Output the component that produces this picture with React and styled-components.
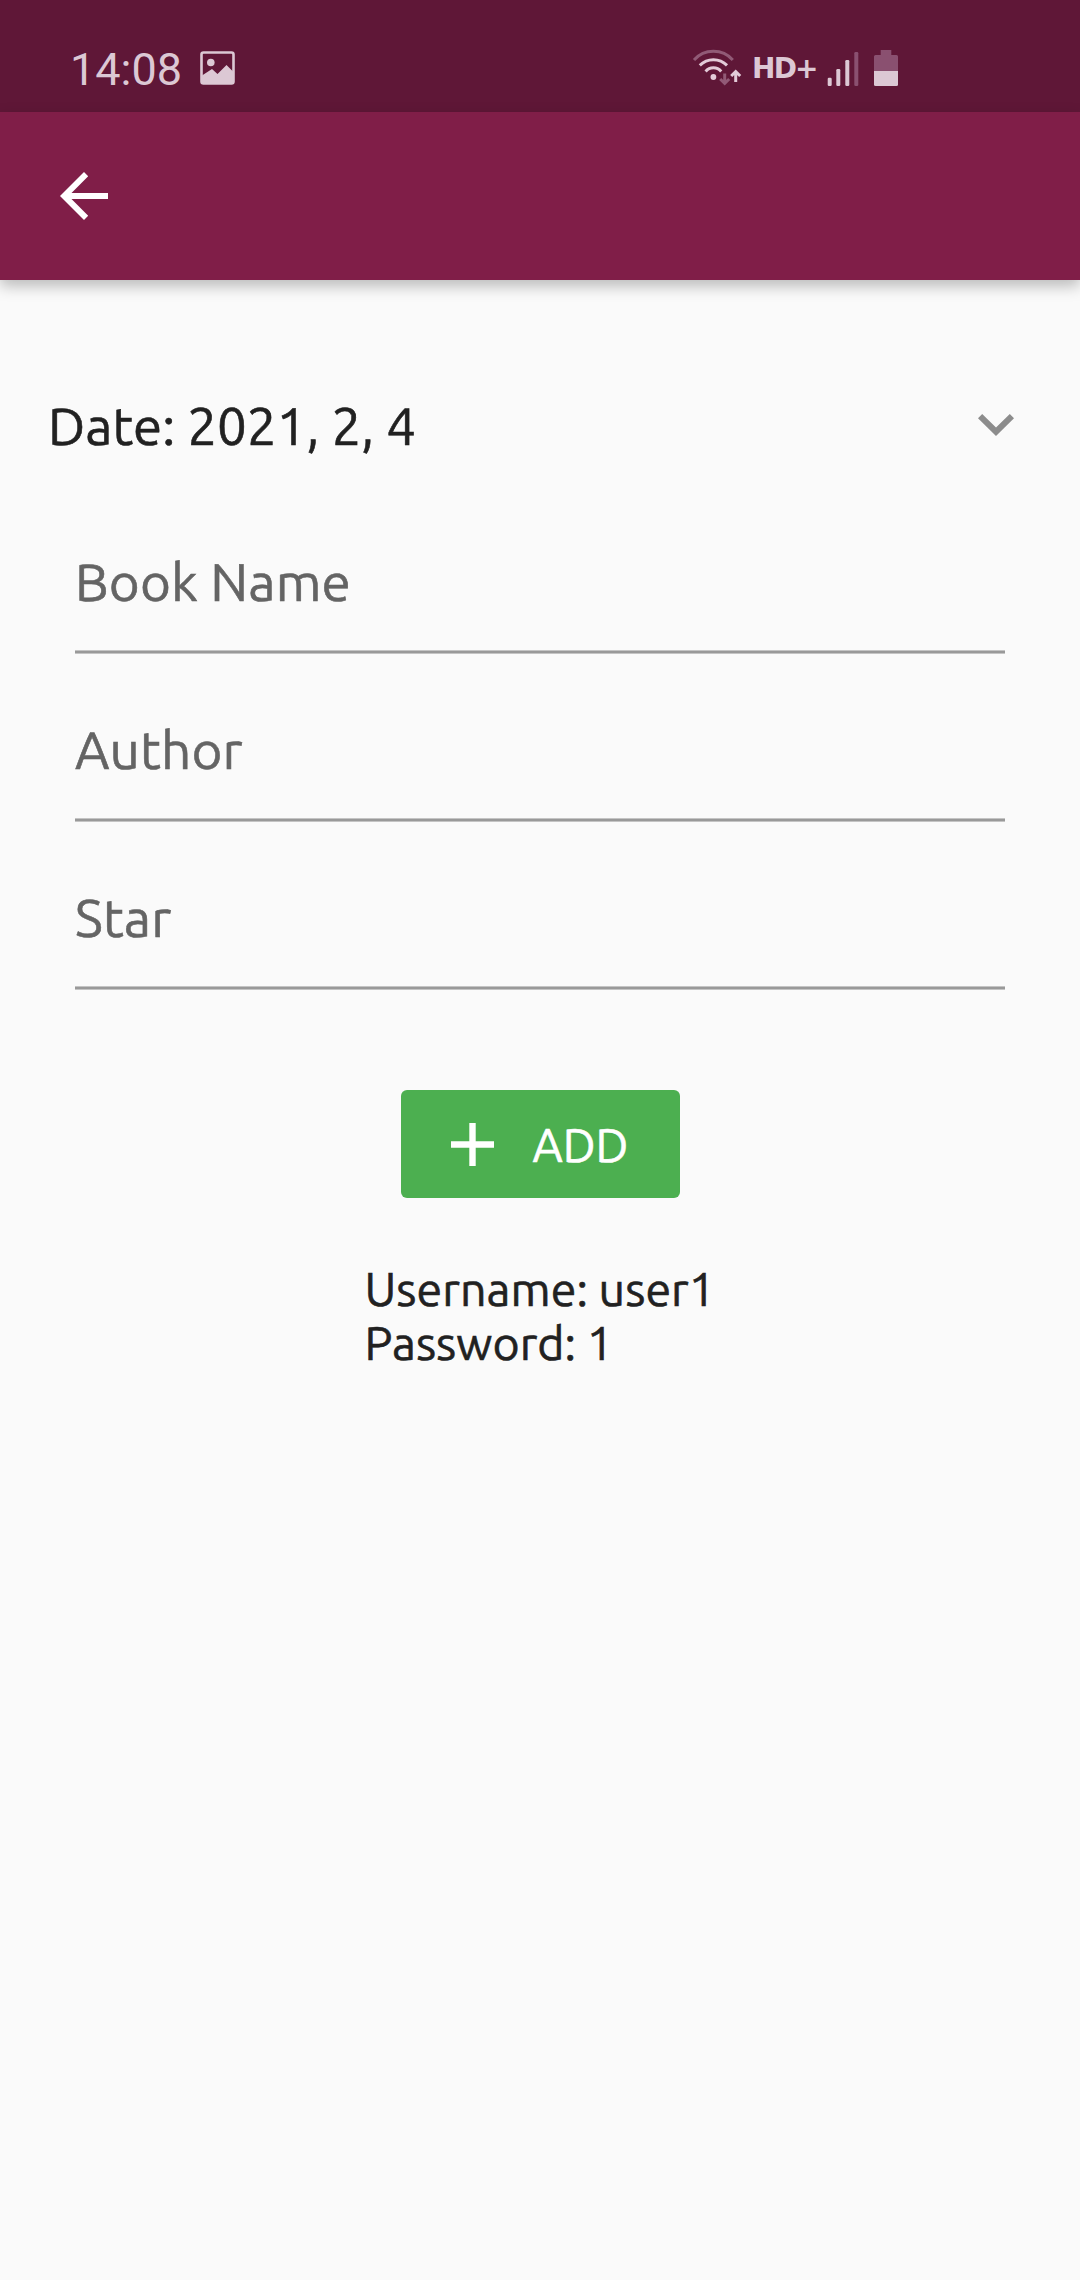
import React from 'react';
import { useState } from 'react';
import styled, { createGlobalStyle } from 'styled-components';

const fields = [
  { name: 'book', label: 'Book Name' },
  { name: 'author', label: 'Author' },
  { name: 'star', label: 'Star' },
];

const App = () => {
  const [values, setValues] = useState({ book: '', author: '', star: '' });
  return (
    <>
      <GlobalStyle />
      <Screen>
        <StatusBar>
          <Clock>14:08</Clock>
          <PictureIcon />
          <StatusRight>
            <WifiIcon />
            <Network>HD+</Network>
            <SignalIcon />
            <BatteryIcon />
          </StatusRight>
        </StatusBar>
        <AppBar>
          <BackButton aria-label='Back'>
            <svg width='48' height='48' viewBox='0 0 48 48'>
              <path
                d='M48 21H11.5L28.2 4.2L24 0L0 24L24 48L28.2 43.8L11.5 27H48Z'
                fill='#fff'
              />
            </svg>
          </BackButton>
        </AppBar>
        <DateRow>
          <DateText>Date: 2021, 2, 4</DateText>
          <svg width='36' height='22' viewBox='0 0 36 22'>
            <path d='M4.2 0L18 13.6L31.8 0L36 4.2L18 22L0 4.2Z' fill='#8c8c8c' />
          </svg>
        </DateRow>
        <Form>
          {fields.map((f) => (
            <Field
              key={f.name}
              value={values[f.name]}
              placeholder={f.label}
              onChange={(e) => setValues({ ...values, [f.name]: e.target.value })}
            />
          ))}
        </Form>
        <AddButton>
          <svg width='43' height='43' viewBox='0 0 43 43'>
            <path d='M18.3 0H24.7V18.3H43V24.7H24.7V43H18.3V24.7H0V18.3H18.3Z' fill='#fff' />
          </svg>
          <AddLabel>ADD</AddLabel>
        </AddButton>
        <Hint>
          <HintLine>Username: user1</HintLine>
          <HintLine>Password: 1</HintLine>
        </Hint>
      </Screen>
    </>
  );
};

const PictureIcon = () => (
  <svg width='36' height='40' viewBox='0 0 36 40'>
    <rect x='1.5' y='4.5' width='32' height='31' rx='2' fill='none' stroke='#dcc8d4' strokeWidth='2.6' />
    <circle cx='10.8' cy='14.5' r='3.8' fill='#dcc8d4' />
    <path d='M2 27.5L12 21L17.5 26L26.5 17L33 23.5V35H2Z' fill='#dcc8d4' />
  </svg>
);

const WifiIcon = () => (
  <svg width='50' height='40' viewBox='0 0 50 40' fill='none' strokeWidth='3'>
    <path d='M2 12A26 26 0 0 1 40.8 12' stroke='#915a76' />
    <path d='M7.8 17.4A19.3 19.3 0 0 1 35 17.4' stroke='#e3cbd8' />
    <path d='M13.6 23.4A10.3 10.3 0 0 1 29.2 23.4' stroke='#e3cbd8' />
    <circle cx='21.4' cy='29' r='2.9' fill='#e3cbd8' />
    <path d='M32.7 25.5V35M28.2 31L32.7 35.5L37.2 31' stroke='#915a76' />
    <path d='M43.7 34V23.5M39.2 28L43.7 23.5L48.2 28' stroke='#e3cbd8' />
  </svg>
);

const SignalIcon = () => (
  <svg width='32' height='40' viewBox='0 0 32 40' fill='#dcc8d4'>
    <rect x='0.7' y='29.7' width='4' height='8.3' rx='1.2' />
    <rect x='9.3' y='21' width='4' height='17' rx='1.2' />
    <rect x='18.3' y='12' width='4' height='26' rx='1.2' />
    <rect x='27.3' y='4' width='4' height='34' rx='1.2' fill='#8a5070' />
  </svg>
);

const BatteryIcon = () => (
  <svg width='24' height='40' viewBox='0 0 24 40'>
    <path d='M6.7 2H17.3V7H22.5Q24 7 24 8.5V23H0V8.5Q0 7 1.5 7H6.7Z' fill='#8a5070' />
    <path d='M0 23H24V36.5Q24 38 22.5 38H1.5Q0 38 0 36.5Z' fill='#dcc8d4' />
  </svg>
);

const GlobalStyle = createGlobalStyle`
  * {
    box-sizing: border-box;
  }
  body {
    margin: 0;
    background: #fafafa;
    font-family: Ubuntu, 'Noto Sans', sans-serif;
  }
  svg {
    display: block;
    flex: none;
  }
`;

const Screen = styled.div`
  display: flex;
  flex-direction: column;
  width: 1080px;
  height: 2280px;
  overflow: hidden;
  background: #fafafa;
  color: #212121;
`;

const StatusBar = styled.div`
  display: flex;
  align-items: center;
  height: 112px;
  padding: 24px 182px 0 70px;
  background: #5f1737;
  color: #dcc8d4;
`;

const Clock = styled.div`
  width: 130px;
  padding-top: 3px;
  font-family: Roboto, sans-serif;
  font-size: 45px;
  line-height: 50px;
  white-space: nowrap;
`;

const StatusRight = styled.div`
  display: flex;
  align-items: center;
  margin-left: auto;

  svg:last-child {
    margin-left: 15px;
  }
`;

const Network = styled.div`
  width: 75px;
  margin-left: 10px;
  padding-top: 2px;
  font-family: 'DejaVu Sans', sans-serif;
  font-size: 28px;
  font-weight: 700;
  line-height: 40px;
  letter-spacing: -1.8px;
`;

const AppBar = styled.header`
  display: flex;
  align-items: center;
  height: 168px;
  flex: none;
  padding-left: 60px;
  background: #801e48;
  box-shadow: 0 6px 14px rgba(0, 0, 0, 0.26);

  & + div {
    margin-top: 100px;
  }
`;

const BackButton = styled.button`
  padding: 0;
  border: 0;
  background: none;
`;

const DateRow = styled.div`
  display: flex;
  align-items: center;
  justify-content: space-between;
  height: 90px;
  padding: 0 66px 0 48px;
`;

const DateText = styled.div`
  padding-top: 2px;
  font-size: 52.8px;
  line-height: 60px;
  -webkit-text-stroke: 0.6px;
`;

const Form = styled.form`
  display: flex;
  flex-direction: column;
  gap: 48px;
  margin: 64px 75px 0;
`;

const Field = styled.input`
  height: 120px;
  padding: 0 0 25px;
  border: 0;
  border-radius: 0;
  outline: 0;
  background: linear-gradient(#c4c4c4 1px, #999 1px, #999 3px, #c4c4c4 3px) 0 100% / 100% 4px no-repeat;
  font-family: inherit;
  font-size: 53px;
  letter-spacing: 0.15px;
  -webkit-text-stroke: 0.6px;

  &::placeholder {
    color: #646464;
    opacity: 1;
  }
`;

const AddButton = styled.button`
  display: flex;
  align-items: center;
  align-self: center;
  width: 279px;
  height: 108px;
  margin-top: 100px;
  padding: 0 0 0 50px;
  border: 0;
  border-radius: 6px;
  background: #4caf50;
  color: #fff;
`;

const AddLabel = styled.span`
  margin-left: 39px;
  padding-top: 2px;
  font-family: Ubuntu, 'Noto Sans', sans-serif;
  font-size: 46.5px;
  line-height: 54px;
  -webkit-text-stroke: 0.6px;
`;

const Hint = styled.div`
  width: 352px;
  margin: 64px 0 0 364.5px;
`;

const HintLine = styled.div`
  font-size: 46.5px;
  line-height: 54px;
  letter-spacing: 0.05px;
  white-space: nowrap;
  -webkit-text-stroke: 0.6px;
`;

export default App;
